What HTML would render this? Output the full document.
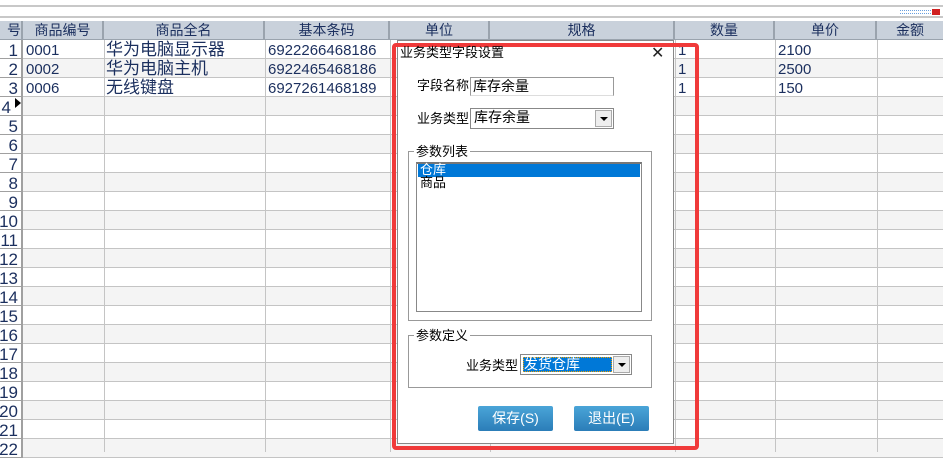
<!DOCTYPE html><html><head><meta charset="utf-8"><style>
*{margin:0;padding:0;box-sizing:border-box}
body{width:943px;height:452px;overflow:hidden;background:#fff;position:relative;font-family:"Liberation Sans","Noto Sans CJK SC",sans-serif;}
.a{position:absolute}
.hd{position:absolute;top:21px;height:19px;background:#c9d1db;border-right:2px solid #9aa3ad;border-bottom:1px solid #9aa3ad;color:#1b2f5e;font-size:14px;text-align:center;line-height:19px}
.row{position:absolute;left:0;width:943px;height:19px;border-bottom:1px solid #c4c4c4}
.vl{position:absolute;top:40px;height:412px;width:1px;background:#c4c4c4}
.rn{position:absolute;left:-16px;width:39px;height:19px;border-right:2px solid #a0a0a0;border-bottom:1px solid #a0a0a0;background:#fff;color:#1b2f5e;font-size:17px;line-height:21px;font-family:"Liberation Sans",sans-serif;overflow:hidden}
.c{position:absolute;color:#1b2f5e;font-size:15px;line-height:19px}
.lbl{position:absolute;font-size:13px;color:#000;line-height:16px}
</style></head><body>
<div class="a" style="left:0;top:5px;width:943px;height:2px;background:#c8c8c8"></div>
<div class="a" style="left:0;top:16px;width:943px;height:2px;background:#c8c8c8"></div>
<div class="a" style="left:900px;top:10px;width:31px;height:4px;border-top:1px dotted #6aa0e0;border-bottom:1px dotted #6aa0e0"></div>
<div class="a" style="left:932px;top:9px;width:8px;height:6px;background:#d02020"></div>
<div class="hd" style="left:0;width:23px;text-align:right">号</div>
<div class="hd" style="left:23px;width:81px">商品编号</div>
<div class="hd" style="left:104px;width:161px">商品全名</div>
<div class="hd" style="left:265px;width:125px">基本条码</div>
<div class="hd" style="left:390px;width:100px">单位</div>
<div class="hd" style="left:490px;width:185px">规格</div>
<div class="hd" style="left:675px;width:100px">数量</div>
<div class="hd" style="left:775px;width:102px">单价</div>
<div class="hd" style="left:877px;width:66px;border-right:none">金额</div>
<div id="rows"></div>
<script>
var h='';for(var i=0;i<22;i++){var t=40+i*19;h+='<div class="row" style="top:'+t+'px;background:'+(i%2?'#f4f4f4':'#fff')+'"></div><div class="rn" style="top:'+t+'px;text-align:right;padding-right:'+(i==3?10:3)+'px">'+(i+1)+'</div>';}
[104,265,390,490,675,775,877].forEach(function(x){h+='<div class="vl" style="left:'+x+'px"></div>'});
document.getElementById('rows').innerHTML=h;
</script>
<div class="a" style="left:15px;top:98px;width:0;height:0;border-top:5px solid transparent;border-bottom:5px solid transparent;border-left:6px solid #000"></div>
<div class="c" style="left:26px;top:41px">0001</div><div class="c" style="left:26px;top:60px">0002</div><div class="c" style="left:26px;top:79px">0006</div>
<div class="c" style="left:106px;top:40px;font-size:17px">华为电脑显示器</div><div class="c" style="left:106px;top:59px;font-size:17px">华为电脑主机</div><div class="c" style="left:106px;top:78px;font-size:17px">无线键盘</div>
<div class="c" style="left:268px;top:41px">6922266468186</div><div class="c" style="left:268px;top:60px">6922465468186</div><div class="c" style="left:268px;top:79px">6927261468189</div>
<div class="c" style="left:678px;top:41px">1</div><div class="c" style="left:678px;top:60px">1</div><div class="c" style="left:678px;top:79px">1</div>
<div class="c" style="left:778px;top:41px">2100</div><div class="c" style="left:778px;top:60px">2500</div><div class="c" style="left:778px;top:79px">150</div>

<div class="a" style="left:397px;top:40px;width:277px;height:404px;background:#fff;border:1px solid #888"></div>
<div class="a" style="left:392px;top:43px;width:307px;height:407px;border:4px solid #f03a3a;border-radius:4px"></div>
<div class="lbl" style="left:400px;top:45px">业务类型字段设置</div>
<div class="a" style="left:651px;top:43px;font-size:16px;color:#222">✕</div>
<div class="lbl" style="left:417px;top:78px">字段名称</div>
<div class="a" style="left:470px;top:77px;width:144px;height:19px;border:1px solid #999;border-bottom-color:#ddd;font-size:14px;padding-left:2px;line-height:17px">库存余量</div>
<div class="lbl" style="left:417px;top:111px">业务类型</div>
<div class="a" style="left:470px;top:108px;width:144px;height:21px;border:1px solid #888;font-size:14px;padding-left:3px;line-height:17px">库存余量
<div class="a" style="right:1px;top:1px;width:17px;height:17px;background:#eee;border:1px solid #aaa"><div class="a" style="left:4px;top:6px;border-left:4px solid transparent;border-right:4px solid transparent;border-top:4px solid #000"></div></div></div>
<div class="a" style="left:408px;top:151px;width:244px;height:170px;border:1px solid #999"></div>
<div class="lbl" style="left:414px;top:144px;background:#fff;padding:0 2px">参数列表</div>
<div class="a" style="left:416px;top:162px;width:226px;height:150px;border:1px solid #888;border-top:2px solid #777"></div>
<div class="a" style="left:418px;top:164px;width:222px;height:13px;background:#0078d7"></div>
<div class="lbl" style="left:420px;top:163px;color:#fff;line-height:14px">仓库</div>
<div class="lbl" style="left:420px;top:176px;line-height:14px">商品</div>
<div class="a" style="left:408px;top:335px;width:244px;height:53px;border:1px solid #999"></div>
<div class="lbl" style="left:414px;top:328px;background:#fff;padding:0 2px">参数定义</div>
<div class="lbl" style="left:466px;top:358px">业务类型</div>
<div class="a" style="left:520px;top:354px;width:112px;height:21px;border:1px solid #888;background:#fff">
<div class="a" style="left:2px;top:2px;width:89px;height:15px;background:#0078d7;border:1px dotted #f0a000;color:#fff;font-size:14px;line-height:13px">发货仓库</div>
<div class="a" style="right:1px;top:1px;width:17px;height:17px;background:#eee;border:1px solid #aaa"><div class="a" style="left:4px;top:6px;border-left:4px solid transparent;border-right:4px solid transparent;border-top:4px solid #000"></div></div></div>
<div class="a" style="left:478px;top:406px;width:75px;height:25px;border-radius:2px;background:linear-gradient(#4aa5d8,#2b7db8);color:#fff;font-size:14px;text-align:center;line-height:25px">保存(S)</div>
<div class="a" style="left:574px;top:406px;width:75px;height:25px;border-radius:2px;background:linear-gradient(#4aa5d8,#2b7db8);color:#fff;font-size:14px;text-align:center;line-height:25px">退出(E)</div>
</body></html>
